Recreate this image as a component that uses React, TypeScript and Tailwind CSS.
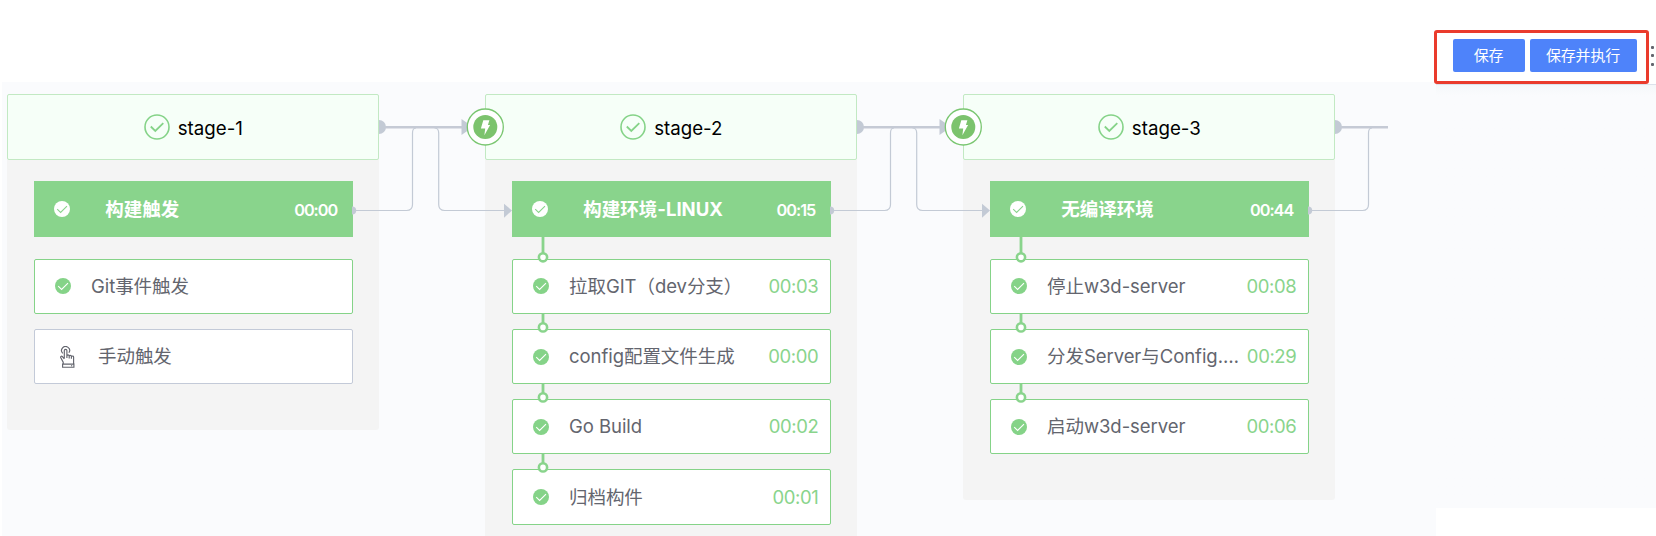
type Step = { label: string; time?: string; manual?: boolean };
type StageData = { name: string; job: string; time: string; steps: Step[] };

const stages: StageData[] = [
  {
    name: 'stage-1',
    job: '构建触发',
    time: '00:00',
    steps: [{ label: 'Git事件触发' }, { label: '手动触发', manual: true }],
  },
  {
    name: 'stage-2',
    job: '构建环境-LINUX',
    time: '00:15',
    steps: [
      { label: '拉取GIT（dev分支）', time: '00:03' },
      { label: 'config配置文件生成', time: '00:00' },
      { label: 'Go Build', time: '00:02' },
      { label: '归档构件', time: '00:01' },
    ],
  },
  {
    name: 'stage-3',
    job: '无编译环境',
    time: '00:44',
    steps: [
      { label: '停止w3d-server', time: '00:08' },
      { label: '分发Server与Config.…', time: '00:29' },
      { label: '启动w3d-server', time: '00:06' },
    ],
  },
];

function CheckDisc({ disc, mark }: { disc: string; mark: string }) {
  return (
    <svg className="block size-4 shrink-0" viewBox="0 0 16 16" fill="none">
      <circle cx="8" cy="8" r="8" fill={disc} />
      <path d="M3.2 8.2 6.6 11.4 13 5.2" stroke={mark} strokeWidth="1.1" />
    </svg>
  );
}

function HandIcon() {
  return (
    <svg className="block h-[22px] w-[15px] shrink-0" viewBox="0 0 15 22" fill="none" stroke="#63656e" strokeWidth="1.15">
      <path d="M2.800 7.400A4 4 0 1 1 8.900 6.800" />
      <path d="M4.300 12.600V4.600a1.300 1.300 0 0 1 2.600 0V12M6.900 9.900c0-1.300 2.300-1.300 2.300 0V12.500M9.200 10.300c0-1.300 2.200-1.300 2.200 0V12.800M11.400 10.900c0-1.200 2.200-1.200 2.200 0V18M4.300 12.800 2.400 10.600C1.500 9.600.2 10.600.8 11.700L3.200 16.200V18" />
      <path d="M2.600 18.100H13.900V21.200H2.600Z M11 19.700h1.200" />
    </svg>
  );
}

function Connector({ last }: { last: boolean }) {
  return (
    <div className="relative w-[106px] shrink-0">
      <svg className="absolute -left-[27px] top-0 z-10 h-[140px] w-[181px]" viewBox="-27 0 181 140" fill="none">
        <path d="M0 26A7 7 0 0 1 0 40Z" fill="#c3cad5" />
        <path d={last ? 'M6 33.200H53' : 'M6 33.200H84'} stroke="#c5cad5" strokeWidth="2.500" />
        <path d="M-27 112.500A4.200 4 0 0 1 -27 120.500Z" fill="#c3cad5" />
        <path d="M-24 116.500H27.500Q33.500 116.500 33.500 110.500V39Q33.500 34 37 34" stroke="#c3cad5" strokeWidth="1.200" />
        {!last && (
          <>
            <path d="M55.500 34Q59.700 34 59.700 39V110.500Q59.700 116.500 65.700 116.500H126" stroke="#c3cad5" strokeWidth="1.200" />
            <path d="M125 109.800 133 116.500 125 123.800Z" fill="#c3cad5" />
            <path d="M82.500 25 94 33 82.500 41Z" fill="#c3cad5" />
            <circle cx="106.300" cy="33" r="18" fill="#fff" stroke="#79c670" strokeWidth="1.300" />
            <circle cx="106.300" cy="33" r="12" fill="#7cc36d" />
            <path d="M104.300 26.300H110.400L108.900 31H111.100L105.400 41.200L106.200 34.600H101.900Z" fill="#fff" />
          </>
        )}
      </svg>
    </div>
  );
}

function StepLink({ tall }: { tall: boolean }) {
  return (
    <svg
      className={tall ? 'absolute -top-[23px] left-[23.600px] h-[28px] w-[12px]' : 'absolute -top-[16px] left-[23.600px] h-[21px] w-[12px]'}
      viewBox={tall ? '0 0 12 28' : '0 0 12 21'}
      fill="none"
    >
      <path d={tall ? 'M6 0V17' : 'M6 0V10'} stroke="#89d48c" strokeWidth="2.800" />
      <circle cx="6" cy={tall ? 20.3 : 13.4} r="4.1" fill="#fff" stroke="#89d48c" strokeWidth="2.6" />
    </svg>
  );
}

function Stage({ data }: { data: StageData }) {
  return (
    <section className="w-[372px] shrink-0 self-start rounded-[3px] bg-[#f4f4f4] pb-[46px]">
      <h2 className="flex h-[66px] items-center justify-center gap-2 rounded-[2px] border border-[#c2e9c3] bg-[#f6fff8] text-[18.700px] text-black">
        <svg className="block size-[26px]" viewBox="0 0 26 26" fill="none" stroke="#85d388">
          <circle cx="13" cy="13" r="12" strokeWidth="1.600" />
          <path d="M6.800 12.500 11.300 17 19.300 9.200" strokeWidth="1.800" />
        </svg>
        <span className="mt-[4px]">{data.name}</span>
      </h2>
      <div className="flex flex-col pl-[26.700px] pr-[26.500px] pt-[21.300px]">
        <div className="flex h-[56px] items-center bg-[#89d48c] pl-[20px] pr-[15.500px] text-white">
          <CheckDisc disc="#fff" mark="#89d48c" />
          <span className="ml-[35.300px] mt-[1px] whitespace-nowrap text-[18.500px] font-bold">{data.job}</span>
          <span className="ml-auto mt-[1px] text-[16.300px] font-semibold tracking-[-1px]">{data.time}</span>
        </div>
        <div className="mt-[21.300px] flex flex-col gap-[14.700px]">
          {data.steps.map((s, i) => (
            <div
              key={s.label}
              className={
                'relative flex h-[55.500px] items-center rounded-[2px] border bg-white pr-[11.500px] ' +
                (s.manual ? 'border-[#c3cad8] pl-[25px]' : 'border-[#85d388] pl-[20px]')
              }
            >
              {s.time && <StepLink tall={i === 0} />}
              {s.manual ? <HandIcon /> : <CheckDisc disc="#85d388" mark="#fff" />}
              <span
                className={
                  (s.manual ? 'ml-[23px]' : 'ml-[20px]') +
                  ' mt-[1px] whitespace-nowrap text-[18.500px] tracking-[-0.05px] text-[#63656e]'
                }
              >
                {s.label}
              </span>
              {s.time && <span className="ml-auto mt-[1px] text-[18.500px] tracking-[-0.4px] text-[#89d48c]">{s.time}</span>}
            </div>
          ))}
        </div>
      </div>
    </section>
  );
}

export default function App() {
  return (
    <div className="flex h-[536px] w-[1656px] flex-col overflow-hidden bg-white font-['Inter','Noto_Sans_CJK_SC',sans-serif]">
      <header className="flex h-[82px] shrink-0 justify-end">
        <div className="relative z-20 mt-[30px] flex h-[54px] w-[215px] shrink-0 items-start gap-[5px] rounded-[3px] border-[3px] border-[#ea3b2c] bg-white pl-[16px] pt-[6px] text-[15px] tracking-[-0.2px] text-white">
          <button className="h-[33px] w-[72px] rounded-[2px] bg-[#4e83fa] pr-[1px] pt-[1px]">保存</button>
          <button className="h-[33px] w-[107px] rounded-[2px] bg-[#4e83fa] pr-[1px] pt-[1px]">保存并执行</button>
        </div>
        <div className="flex w-[7px] flex-col items-center gap-[5.300px] pt-[46px]">
          <i className="size-[3px] rounded-[1px] bg-[#63656e]" />
          <i className="size-[3px] rounded-[1px] bg-[#63656e]" />
          <i className="size-[3px] rounded-[1px] bg-[#63656e]" />
        </div>
      </header>
      <main className="ml-[2px] flex h-[454px]">
        <div className="flex w-[1434px] shrink-0 bg-[#fafbfd] pl-[5.300px] pt-[12px]">
          {stages.map((s, i) => (
            <div key={s.name} className="flex shrink-0">
              <Stage data={s} />
              <Connector last={i === stages.length - 1} />
            </div>
          ))}
        </div>
        <div className="flex grow flex-col pt-[2px]">
          <div className="h-[424px] border-t border-[#dce2eb] bg-[#fafbfd] bg-linear-to-b from-[#f5f7f9] to-[#fafbfd] to-[10px]" />
        </div>
      </main>
    </div>
  );
}
